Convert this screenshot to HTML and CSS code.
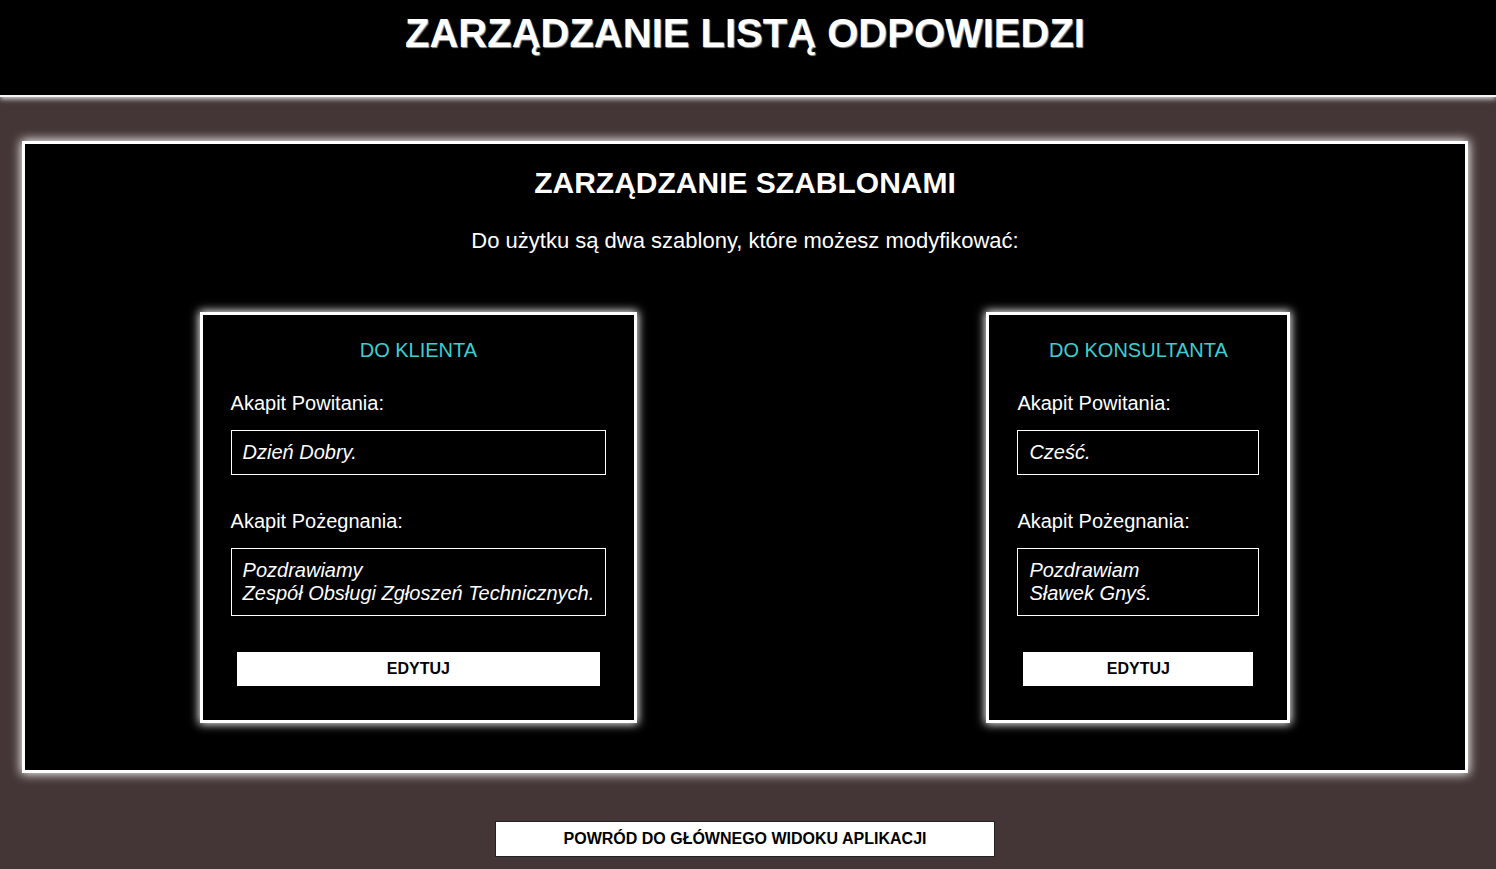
FILE: index.html
```html
<!DOCTYPE html>
<html lang="pl">
<head>
<meta charset="utf-8">
<title>Zarządzanie listą odpowiedzi</title>
<link rel="stylesheet" href="styles.css">
</head>
<body>
<header class="top">
  <h1 class="top-title">ZARZĄDZANIE LISTĄ ODPOWIEDZI</h1>
</header>
<main class="page">
  <section class="panel">
    <h2 class="panel-title">ZARZĄDZANIE SZABLONAMI</h2>
    <p class="panel-lead">Do użytku są dwa szablony, które możesz modyfikować:</p>
    <div class="cards">
      <div class="card">
        <h3 class="card-title">DO KLIENTA</h3>
        <div class="label">Akapit Powitania:</div>
        <div class="field">Dzień Dobry.</div>
        <div class="label">Akapit Pożegnania:</div>
        <div class="field field-last">Pozdrawiamy<br>Zespół Obsługi Zgłoszeń Technicznych.</div>
        <button class="btn-edit">EDYTUJ</button>
      </div>
      <div class="card">
        <h3 class="card-title">DO KONSULTANTA</h3>
        <div class="label">Akapit Powitania:</div>
        <div class="field">Cześć.</div>
        <div class="label">Akapit Pożegnania:</div>
        <div class="field field-last">Pozdrawiam<br>Sławek Gnyś.</div>
        <button class="btn-edit">EDYTUJ</button>
      </div>
    </div>
  </section>
  <div class="back-row">
    <button class="btn-back">POWRÓD DO GŁÓWNEGO WIDOKU APLIKACJI</button>
  </div>
</main>
</body>
</html>
```
FILE: styles.css
```css
html, body {
  margin: 0;
  padding: 0;
}
body {
  background: #443636;
  font-family: "Liberation Sans", Arial, sans-serif;
  color: #fff;
  min-height: 869px;
}
.top {
  background: #000;
  height: 85px;
  padding: 10px 6px 0 0;
  border-bottom: 2px solid #f4f4f4;
  box-shadow: 0 2px 5px #d8d8d8;
}
.top-title {
  margin: 0;
  text-align: center;
  font-size: 40px;
  line-height: 46px;
  font-weight: bold;
  color: #fff;
  text-shadow: 1px 1px 1px #9a9a9a;
}
.page {
  padding: 44px 28px 0 22px;
}
.panel {
  background: #000;
  border: 3px solid #fff;
  box-shadow: 0 0 10px 1px #fff;
  padding: 22px 0 47px;
}
.panel-title {
  margin: 0;
  text-align: center;
  font-size: 30px;
  line-height: 34px;
  font-weight: bold;
}
.panel-lead {
  margin: 28px 0 59px;
  text-align: center;
  font-size: 22px;
  line-height: 25px;
}
.cards {
  display: flex;
  justify-content: space-around;
  align-items: flex-start;
}
.card {
  border: 3px solid #fff;
  box-shadow: 0 0 9px 1px #fff;
  padding: 24px 28px 34px;
  display: flex;
  flex-direction: column;
}
.card-title {
  margin: 0 0 30px;
  text-align: center;
  font-size: 20px;
  line-height: 23px;
  font-weight: normal;
  color: #3dcfd0;
}
.label {
  font-size: 20px;
  line-height: 23px;
  margin-bottom: 15px;
}
.field {
  border: 1px solid #fff;
  padding: 10px 11px;
  min-width: 242px;
  box-sizing: border-box;
  font-size: 20px;
  line-height: 23px;
  font-style: italic;
  margin-bottom: 35px;
  white-space: nowrap;
}
.field-last {
  margin-bottom: 36px;
}
.btn-edit {
  margin: 0 6px;
  height: 34px;
  border: none;
  background: #fff;
  color: #000;
  font-family: "Liberation Sans", Arial, sans-serif;
  font-size: 16px;
  font-weight: bold;
  padding: 0;
}
.back-row {
  display: flex;
  justify-content: center;
  padding: 48px 0 12px;
}
.btn-back {
  width: 500px;
  height: 36px;
  background: #fff;
  border: 1px solid #222;
  color: #000;
  font-family: "Liberation Sans", Arial, sans-serif;
  font-size: 16px;
  font-weight: bold;
  padding: 0;
}
```
